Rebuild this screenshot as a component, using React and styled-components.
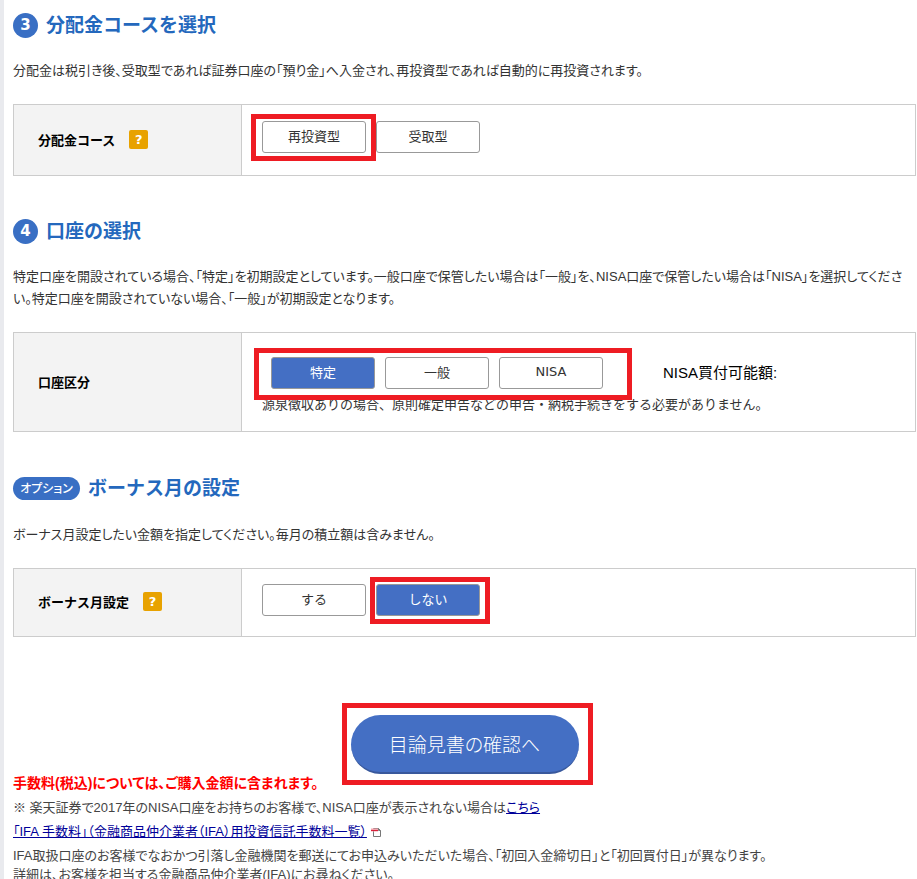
import React, { useState } from 'react'
import styled, { createGlobalStyle, css } from 'styled-components'

const meiryo = css`font-family: 'DejaVu Sans', 'Noto Sans CJK JP', sans-serif;`;
const gothic = css`
    font-family: 'Liberation Sans', 'Noto Sans CJK JP', sans-serif;
    font-feature-settings: 'palt';
`;

const GlobalStyle = createGlobalStyle`
    * {
        box-sizing: border-box;
    }
    body {
        margin: 0;
        background: #fff;
        color: #333;
        font-size: 13px;
        ${gothic}
    }
`

const Page = styled.main`
    min-height: 100vh;
    padding: 12px 1px 0 9px;
    border-left: 4px solid #e9eaee;
`

const Section = styled.section`
    margin-bottom: 42px;
`

const Heading = styled.h2`
    display: flex;
    align-items: center;
    gap: 8px;
    min-height: 26px;
    margin: 0 0 22px;
    color: #2468bd;
    font-size: 19px;
    line-height: 24px;
    font-weight: bold;
    ${meiryo}
    font-feature-settings: normal;
`

const Badge = styled.span`
    display: flex;
    align-items: center;
    justify-content: center;
    width: 25px;
    height: 25px;
    border-radius: 50%;
    background: #396fc4;
    color: #fff;
    font-size: 15px;
`

const OptionBadge = styled(Badge)`
    width: 67px;
    height: 23px;
    margin: 3px 0 2px;
    border-radius: 12px;
    font-size: 12px;
    font-weight: 500;
    font-feature-settings: 'palt';
`

const Lead = styled.p`
    margin: 0 0 22px;
    line-height: 22px;
`

const Table = styled.table`
    width: 100%;
    border-collapse: collapse;
    font-feature-settings: normal;
    ${meiryo}

    th, td {
        border: 1px solid #ccc;
        text-align: left;
    }
    th {
        width: 228px;
        padding: 0 24px 2px;
        background: #f3f3f3;
        color: #000;
    }
    td {
        padding: ${props => props.$pad};
    }
`

const LabelRow = styled.div`
    display: flex;
    align-items: center;
    gap: 14px;
`

const HelpButton = styled.button`
    width: 19px;
    height: 19px;
    padding: 0;
    border: 0;
    border-radius: 2px;
    background: #e8a200;
    color: #fff;
    font-size: 13px;
    line-height: 19px;
    font-weight: bold;
    ${meiryo}
`

const Choices = styled.div`
    display: flex;
    align-items: center;
    gap: 10px;
`

const AccountRow = styled.div`
    display: flex;
    align-items: center;
    gap: 60px;
    padding-left: 9px;
`

const Choice = styled.button`
    width: 104px;
    height: 32px;
    padding: 0 0 4px;
    border: 1px solid #999;
    border-radius: 3px;
    background: ${props => (props.$on ? '#446fc4' : '#fff')};
    color: ${props => (props.$on ? '#fff' : '#333')};
    font-size: 13px;
    ${meiryo}
`

const Marked = styled.div`
    position: relative;
`

// 赤枠（上 右 下 左のはみ出し）
const RedFrame = styled.span`
    position: absolute;
    inset: ${props => props.$inset};
    border: 5px solid #ee1c23;
    pointer-events: none;
`

const Budget = styled.span`
    padding-bottom: 4px;
    color: #000;
    font-size: 15px;
    ${gothic}
`

const Note = styled.p`
    margin: 6px 0 0;
    line-height: 20px;
`

const SubmitArea = styled.div`
    display: flex;
    justify-content: center;
    margin-top: 78px;
`

const SubmitButton = styled.button`
    width: 228px;
    height: 59px;
    padding: 0;
    border: 0;
    border-bottom: 2px solid #38589c;
    border-radius: 30px;
    background: #446fc4;
    color: #fff;
    font-size: 19px;
    font-weight: 300;
    ${gothic}
`

const FootText = styled.p`
    margin: 0 0 5px;
    line-height: 19px;
    color: #444;
`

const FeeText = styled(FootText)`
    color: #f00;
    font-size: 14px;
    font-weight: bold;
`

const Link = styled.a`
    color: #000099;
    text-decoration: underline;
`

const PdfIcon = styled.svg`
    margin-left: 4px;
    vertical-align: -2px;
`

function Options({ items, value, onChange, marked, frame }) {
    return items.map(item => (
        <Marked key={item}>
            <Choice type="button" $on={item === value} aria-pressed={item === value} onClick={() => onChange(item)}>
                {item}
            </Choice>
            {marked === item && <RedFrame $inset={frame} />}
        </Marked>
    ));
}

function App() {
    const [course, setCourse] = useState('');
    const [account, setAccount] = useState('特定');
    const [bonus, setBonus] = useState('しない');

    return (
        <>
            <GlobalStyle />
            <Page>
                <Section>
                    <Heading><Badge>3</Badge>分配金コースを選択</Heading>
                    <Lead>分配金は税引き後、受取型であれば証券口座の「預り金」へ入金され、再投資型であれば自動的に再投資されます。</Lead>
                    <Table $pad="16px 20px 22px">
                        <tbody>
                            <tr>
                                <th scope="row">
                                    <LabelRow>分配金コース<HelpButton type="button">?</HelpButton></LabelRow>
                                </th>
                                <td>
                                    <Choices>
                                        <Options
                                            items={['再投資型', '受取型']}
                                            value={course}
                                            onChange={setCourse}
                                            marked="再投資型"
                                            frame="-7px -10px -8px -11px"
                                        />
                                    </Choices>
                                </td>
                            </tr>
                        </tbody>
                    </Table>
                </Section>

                <Section>
                    <Heading><Badge>4</Badge>口座の選択</Heading>
                    <Lead>特定口座を開設されている場合、「特定」を初期設定としています。一般口座で保管したい場合は「一般」を、NISA口座で保管したい場合は「NISA」を選択してください。特定口座を開設されていない場合、「一般」が初期設定となります。</Lead>
                    <Table $pad="24px 20px 16px">
                        <tbody>
                            <tr>
                                <th scope="row">口座区分</th>
                                <td>
                                    <AccountRow>
                                        <Marked>
                                            <Choices>
                                                <Options items={['特定', '一般', 'NISA']} value={account} onChange={setAccount} />
                                            </Choices>
                                            <RedFrame $inset="-9px -29px -11px -17px" />
                                        </Marked>
                                        <Budget>NISA買付可能額:</Budget>
                                    </AccountRow>
                                    <Note>源泉徴収ありの場合、原則確定申告などの申告・納税手続きをする必要がありません。</Note>
                                </td>
                            </tr>
                        </tbody>
                    </Table>
                </Section>

                <Section>
                    <Heading><OptionBadge>オプション</OptionBadge>ボーナス月の設定</Heading>
                    <Lead>ボーナス月設定したい金額を指定してください。毎月の積立額は含みません。</Lead>
                    <Table $pad="15px 20px 20px">
                        <tbody>
                            <tr>
                                <th scope="row">
                                    <LabelRow>ボーナス月設定<HelpButton type="button">?</HelpButton></LabelRow>
                                </th>
                                <td>
                                    <Choices>
                                        <Options
                                            items={['する', 'しない']}
                                            value={bonus}
                                            onChange={setBonus}
                                            marked="しない"
                                            frame="-7px -10px -8px -6px"
                                        />
                                    </Choices>
                                </td>
                            </tr>
                        </tbody>
                    </Table>
                </Section>

                <SubmitArea>
                    <Marked>
                        <SubmitButton type="button">目論見書の確認へ</SubmitButton>
                        <RedFrame $inset="-12px -14px -11px -9px" />
                    </Marked>
                </SubmitArea>

                <FeeText>手数料(税込)については、ご購入金額に含まれます。</FeeText>
                <FootText>※ 楽天証券で2017年のNISA口座をお持ちのお客様で、NISA口座が表示されない場合は<Link href="#nisa">こちら</Link></FootText>
                <FootText>
                    <Link href="#ifa">「IFA 手数料」（金融商品仲介業者（IFA）用投資信託手数料一覧）</Link>
                    <PdfIcon width="11" height="11" viewBox="0 0 11 11" fill="none">
                        <path d="M2.5 1.5h5l2 2v6h-7z" stroke="#777" />
                        <path d="M7.5 1.5v2h2" stroke="#777" />
                        <path d="M0 3h7" stroke="#f5a3ad" strokeWidth="3" />
                        <path d="M0 3.5h7" stroke="#d8203a" />
                    </PdfIcon>
                </FootText>
                <FootText>
                    IFA取扱口座のお客様でなおかつ引落し金融機関を郵送にてお申込みいただいた場合、「初回入金締切日」と「初回買付日」が異なります。<br />
                    詳細は、お客様を担当する金融商品仲介業者(IFA)にお尋ねください。
                </FootText>
            </Page>
        </>
    );
}

export default App;
